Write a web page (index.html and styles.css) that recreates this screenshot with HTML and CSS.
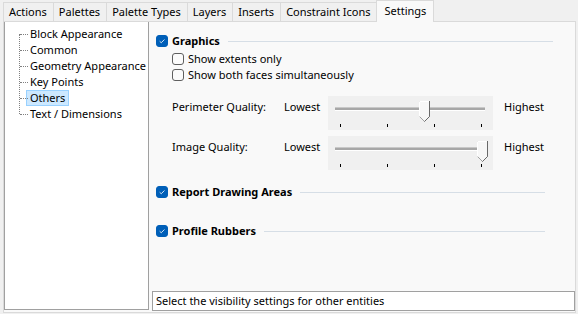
FILE: index.html
```html
<!DOCTYPE html>
<html lang="en">
<head>
<meta charset="UTF-8" />
<title>Settings</title>
<link rel="stylesheet" href="styles.css">
</head>
<body>

<!-- TABS -->
<div class="tabs">
  <div class="tab">Actions</div>
  <div class="tab">Palettes</div>
  <div class="tab">Palette Types</div>
  <div class="tab">Layers</div>
  <div class="tab">Inserts</div>
  <div class="tab">Constraint Icons</div>
  <div class="tab tab-active">Settings</div>
</div>

<!-- PANEL -->
<div class="panel">
  <div class="tree">
    <ul class="tree-list">
      <li><span>Block Appearance</span></li>
      <li><span>Common</span></li>
      <li><span>Geometry Appearance</span></li>
      <li><span>Key Points</span></li>
      <li class="selected"><span>Others</span></li>
      <li><span>Text / Dimensions</span></li>
    </ul>
  </div>

  <div class="settings">
    <div class="options">
      <div class="group-head group-wide">
        <span class="check check-on"><svg viewBox="0 0 12 12"><path d="M3.2 6.3 L5.1 8.1 L8.9 4.2" /></svg></span>
        <span class="group-title">Graphics</span>
        <span class="group-rule"></span>
      </div>
      <div class="option"><span class="check"></span>Show extents only</div>
      <div class="option"><span class="check"></span>Show both faces simultaneously</div>

      <div class="quality quality-first">
        <span class="quality-label">Perimeter Quality:</span>
        <span class="quality-end">Lowest</span>
        <div class="slider">
          <div class="slider-track"></div>
          <svg class="slider-thumb" style="left: 91px" viewBox="0 0 11 21"><path class="thumb-fill" d="M0.5 0.5 H10.5 V15.5 L5.5 20.5 L0.5 15.5 Z" /><path class="thumb-light" d="M0.5 15.5 V0.5 H10" /><path class="thumb-dark" d="M10.5 0 V15.5 L5.5 20.5" /></svg>
          <div class="slider-ticks"><i></i><i></i><i></i><i></i></div>
        </div>
        <span class="quality-end quality-max">Highest</span>
      </div>

      <div class="quality">
        <span class="quality-label">Image Quality:</span>
        <span class="quality-end">Lowest</span>
        <div class="slider">
          <div class="slider-track"></div>
          <svg class="slider-thumb" style="left: 149px" viewBox="0 0 11 21"><path class="thumb-fill" d="M0.5 0.5 H10.5 V15.5 L5.5 20.5 L0.5 15.5 Z" /><path class="thumb-light" d="M0.5 15.5 V0.5 H10" /><path class="thumb-dark" d="M10.5 0 V15.5 L5.5 20.5" /></svg>
          <div class="slider-ticks"><i></i><i></i><i></i><i></i></div>
        </div>
        <span class="quality-end quality-max">Highest</span>
      </div>

      <div class="group-head group-report">
        <span class="check check-on"><svg viewBox="0 0 12 12"><path d="M3.2 6.3 L5.1 8.1 L8.9 4.2" /></svg></span>
        <span class="group-title">Report Drawing Areas</span>
        <span class="group-rule"></span>
      </div>

      <div class="group-head group-profile">
        <span class="check check-on"><svg viewBox="0 0 12 12"><path d="M3.2 6.3 L5.1 8.1 L8.9 4.2" /></svg></span>
        <span class="group-title">Profile Rubbers</span>
        <span class="group-rule"></span>
      </div>
    </div>

    <div class="status">Select the visibility settings for other entities</div>
  </div>
</div>

</body>
</html>
```

FILE: styles.css
```css
/* Reset */
*, *::before, *::after {
  box-sizing: border-box;
}
body, ul, li {
  margin: 0;
  padding: 0;
}
ul {
  list-style: none;
}

body {
  width: 578px;
  height: 314px;
  overflow: hidden;
  background: #f0f0f0;
  font-family: "Noto Sans", "Open Sans", sans-serif;
  font-size: 11px;
  line-height: 16px;
  color: #000;
}

/* Tabs */
.tabs {
  display: flex;
  align-items: flex-end;
  height: 21px;
  padding-left: 3px;
  position: relative;
  z-index: 1;
}
.tab {
  height: 19px;
  line-height: 18px;
  padding: 0 6px 0 5px;
  border: 1px solid #dadada;
  border-bottom: none;
  margin-right: -1px;
  background: #f0f0f0;
  white-space: nowrap;
}
.tab-active {
  height: 22px;
  line-height: 19px;
  padding: 0 7px;
  margin-bottom: -1px;
  background: #f9f9f9;
}

/* Panel */
.panel {
  display: flex;
  width: 573px;
  height: 292px;
  margin-left: 3px;
  border: 1px solid #dadada;
  background: #f9f9f9;
}

/* Tree */
.tree {
  width: 145px;
  height: 288px;
  padding: 4px 0 0 14px;
  background: #fff;
  border: 1px solid #a0a0a0;
  border-top: none;
}
.tree-list {
  position: relative;
}
.tree-list::before {
  content: "";
  position: absolute;
  left: 0;
  top: 8px;
  bottom: 8px;
  border-left: 1px dotted #808080;
}
.tree-list li {
  position: relative;
  height: 16px;
  padding-left: 7px;
  white-space: nowrap;
}
.tree-list li::before {
  content: "";
  position: absolute;
  left: 1px;
  top: 8px;
  width: 8px;
  border-top: 1px dotted #808080;
}
.tree-list span {
  display: inline-block;
  height: 16px;
  line-height: 14px;
  padding: 0 3px;
  border: 1px solid transparent;
}
.tree-list .selected span {
  background: #cce8ff;
  border-color: #99d1ff;
}

/* Settings column */
.settings {
  flex: 1;
  display: flex;
  flex-direction: column;
  padding: 0 0 1px 3px;
}
.options {
  flex: 1;
  padding: 11px 0 0 4px;
}

.check {
  flex: none;
  width: 12px;
  height: 12px;
  margin-right: 4px;
  border: 1px solid #5f5f5f;
  border-radius: 3px;
  background: #fbfbfb;
}
.check-on {
  border-color: #005fb8;
  background: #005fb8;
}
.check svg {
  display: block;
  width: 10px;
  height: 10px;
  margin: 0;
}
.check svg path {
  fill: none;
  stroke: #fff;
  stroke-width: 1;
}

.group-head {
  display: flex;
  align-items: center;
  height: 16px;
}
.group-title {
  font-weight: 700;
  white-space: nowrap;
}
.group-rule {
  flex: 1;
  height: 1px;
  margin: 0 30px 0 8px;
  background: #d6dee6;
}
.group-wide .group-rule {
  margin-right: 22px;
}
.group-report {
  margin-top: 14px;
}
.group-profile {
  margin-top: 23px;
}

.option {
  display: flex;
  align-items: center;
  height: 16px;
  padding-left: 16px;
}
.group-head + .option {
  margin-top: 2px;
}

/* Quality sliders */
.quality {
  display: flex;
  margin-top: 6px;
  padding-left: 16px;
}
.quality-first {
  margin-top: 13px;
}
.quality-label {
  width: 112px;
  padding-top: 3px;
  white-space: nowrap;
}
.quality-end {
  width: 44px;
  padding-top: 3px;
}
.quality-max {
  width: auto;
  margin-left: 11px;
}
.slider {
  position: relative;
  width: 165px;
  height: 34px;
  background: #f0f0f0;
}
.slider-track {
  width: 150px;
  height: 4px;
  margin: 11px 0 0 7px;
  background: #a7a7a7;
  border-top: 1px solid #c8c8c8;
  border-bottom: 1px solid #fff;
}
.slider-thumb {
  position: absolute;
  top: 5px;
  width: 11px;
  height: 21px;
}
.thumb-fill {
  fill: #f7f7f7;
  stroke: #a0a0a0;
}
.thumb-light {
  fill: none;
  stroke: #fff;
}
.thumb-dark {
  fill: none;
  stroke: #696969;
}
.slider-ticks {
  display: flex;
  justify-content: space-between;
  margin: 13px 11px 0 12px;
}
.slider-ticks i {
  width: 1px;
  height: 3px;
  background: #000;
}

/* Status */
.status {
  height: 20px;
  line-height: 18px;
  padding-left: 3px;
  background: #fff;
  border: 1px solid #a0a0a0;
  white-space: nowrap;
}
```
